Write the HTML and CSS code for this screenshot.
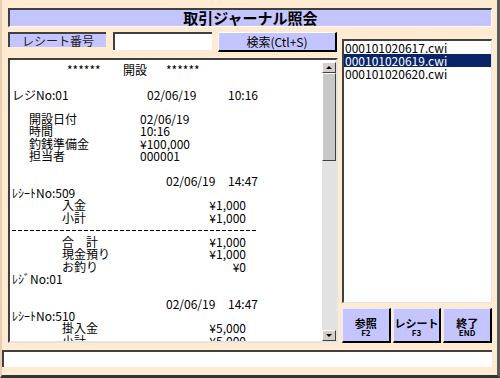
FILE: index.html
```html
<!DOCTYPE html>
<html lang="ja">
<head>
<meta charset="utf-8">
<title>取引ジャーナル照会</title>
<link rel="stylesheet" href="styles.css">
</head>
<body>
<div class="window">
  <div class="main">
    <div class="title">取引ジャーナル照会</div>
    <div class="content">
      <div class="left">
        <div class="search">
          <div class="label">レシート番号</div>
          <div class="input"></div>
          <div class="search-btn">検索(Ctl+S)</div>
        </div>
        <div class="journal">
          <div class="text">
            <div class="ln hd"><span class="a">******</span><span class="b">開設</span><span>******</span></div>
            <div class="ln"></div>
            <div class="ln reg"><span class="a">レジNo:01</span><span class="b">02/06/19</span><span>10:16</span></div>
            <div class="ln"></div>
            <div class="ln kv"><span class="a">開設日付</span><span>02/06/19</span></div>
            <div class="ln kv"><span class="a">時間</span><span>10:16</span></div>
            <div class="ln kv"><span class="a">釣銭準備金</span><span>¥100,000</span></div>
            <div class="ln kv"><span class="a">担当者</span><span>000001</span></div>
            <div class="ln"></div>
            <div class="ln dt"><span class="a">02/06/19</span><span>14:47</span></div>
            <div class="ln"><span>ﾚｼｰﾄNo:509</span></div>
            <div class="ln it"><span class="a">入金</span><span class="b">¥1,000</span></div>
            <div class="ln it"><span class="a">小計</span><span class="b">¥1,000</span></div>
            <div class="ln"><span class="dash"></span></div>
            <div class="ln it"><span class="a">合　計</span><span class="b">¥1,000</span></div>
            <div class="ln it"><span class="a">現金預り</span><span class="b">¥1,000</span></div>
            <div class="ln it"><span class="a">お釣り</span><span class="b">¥0</span></div>
            <div class="ln"><span>ﾚｼﾞNo:01</span></div>
            <div class="ln"></div>
            <div class="ln dt"><span class="a">02/06/19</span><span>14:47</span></div>
            <div class="ln"><span>ﾚｼｰﾄNo:510</span></div>
            <div class="ln it"><span class="a">掛入金</span><span class="b">¥5,000</span></div>
            <div class="ln it"><span class="a">小計</span><span class="b">¥5,000</span></div>
            <div class="ln"></div>
          </div>
          <div class="scroll">
            <div class="sb-btn up"></div>
            <div class="thumb"></div>
            <div class="track"></div>
            <div class="sb-btn down"></div>
          </div>
        </div>
      </div>
      <div class="right">
        <div class="files">
          <div class="file">000101020617.cwi</div>
          <div class="file sel">000101020619.cwi</div>
          <div class="file">000101020620.cwi</div>
        </div>
        <div class="fbtns">
          <div class="fbtn"><span class="cap">参照</span><span class="key">F2</span></div>
          <div class="fbtn"><span class="cap">レシート</span><span class="key">F3</span></div>
          <div class="fbtn"><span class="cap">終了</span><span class="key">END</span></div>
        </div>
      </div>
    </div>
  </div>
  <div class="status"></div>
</div>
</body>
</html>
```

FILE: styles.css
```css
* { box-sizing: border-box; margin: 0; padding: 0; }
html, body { width: 500px; height: 378px; overflow: hidden; }
body {
  font-family: "Noto Sans CJK JP", "Noto Sans", sans-serif;
  font-size: 12px;
  color: #000;
  background: #FEEBD1;
}
.window {
  width: 500px;
  height: 378px;
  background: #FEEBD1;
  border-left: 2px solid #E9CFB0;
  border-right: 3px solid #5a5a5a;
  border-bottom: 3px solid #333;
  padding-right: 5px;
  display: flex;
  flex-direction: column;
}
.main { padding: 8px 0 0 6px; }
.title {
  height: 19px;
  background: #C4C4FF;
  border-top: 2px solid #404040;
  border-left: 2px solid #404040;
  border-right: 1px solid #fff;
  border-bottom: 1px solid #fff;
  text-align: center;
  font-size: 15px;
  line-height: 15px;
  font-weight: bold;
}
.content { display: flex; gap: 4px; margin-top: 5px; }
.left { width: 330px; }
.search { display: flex; align-items: flex-start; height: 20px; }
.label {
  width: 98px;
  height: 15px;
  background: #C4C4FF;
  border-top: 2px solid #404040;
  border-left: 2px solid #404040;
  text-align: center;
  line-height: 13px;
  color: #222;
}
.input {
  width: 99px;
  height: 18px;
  margin-left: 7px;
  background: #fff;
  border-top: 2px solid #404040;
  border-left: 2px solid #404040;
}
.search-btn {
  width: 119px;
  height: 20px;
  margin-left: 6px;
  background: #C4C4FF;
  border-top: 1px solid #fff;
  border-left: 1px solid #fff;
  border-right: 2px solid #000;
  border-bottom: 2px solid #000;
  text-align: center;
  line-height: 17px;
}
.journal {
  margin-top: 6px;
  height: 285px;
  display: flex;
  background: #fff;
  border-top: 2px solid #404040;
  border-left: 2px solid #404040;
  border-right: 2px solid #e4e4e4;
  border-bottom: 2px solid #e4e4e4;
  overflow: hidden;
}
.text { flex: 1; padding: 4px 0 0 2px; overflow: hidden; }
.ln {
  height: 12.3px;
  line-height: 12.3px;
  display: flex;
  align-items: center;
  white-space: pre;
}
.ln span { flex-shrink: 0; }
.hd .a { margin-left: 55px; width: 56px; }
.hd .b { width: 43px; }
.reg .a { width: 135px; }
.reg .b { width: 81px; }
.kv .a { margin-left: 17px; width: 111px; }
.dt .a { margin-left: 154px; width: 62px; }
.it .a { margin-left: 50px; width: 134px; }
.it .b { width: 50px; text-align: right; }
.dash {
  width: 246px;
  height: 1px;
  background: repeating-linear-gradient(90deg, #000 0 4px, transparent 4px 6px);
}
.scroll {
  width: 14px;
  display: flex;
  flex-direction: column;
  padding-top: 2px;
}
.sb-btn, .thumb {
  background: #D4D0C8;
  border-top: 1px solid #fff;
  border-left: 1px solid #fff;
  border-right: 1px solid #404040;
  border-bottom: 1px solid #404040;
}
.sb-btn {
  height: 11px;
  display: flex;
  align-items: center;
  justify-content: center;
}
.up::after, .down::after {
  content: "";
  width: 0;
  height: 0;
  border-left: 3px solid transparent;
  border-right: 3px solid transparent;
}
.up::after { border-bottom: 3px solid #000; }
.down::after { border-top: 3px solid #000; }
.thumb { height: 88px; background: #C8C8C8; }
.track { flex: 1; background: #E2E2E2; }
.right { width: 150px; padding-top: 7px; display: flex; flex-direction: column; }
.files {
  height: 264px;
  background: #fff;
  border-top: 2px solid #404040;
  border-left: 2px solid #404040;
  border-right: 1px solid #e4e4e4;
  border-bottom: 1px solid #e4e4e4;
}
.file {
  height: 13px;
  line-height: 13px;
  padding-left: 1px;
  white-space: nowrap;
}
.file.sel { background: #0A246A; color: #fff; }
.fbtns { display: flex; gap: 2px; margin-top: 5px; height: 35px; }
.fbtn {
  flex: 1;
  background: #C4C4FF;
  border-top: 1px solid #e8e8ff;
  border-left: 1px solid #e8e8ff;
  border-right: 2px solid #000;
  border-bottom: 2px solid #000;
  display: flex;
  flex-direction: column;
  align-items: center;
  justify-content: center;
  padding-top: 4px;
  font-weight: bold;
}
.fbtn .cap { font-size: 11px; line-height: 11px; height: 11px; }
.fbtn .key { font-size: 8px; line-height: 8px; height: 8px; }
.status {
  margin-top: 7px;
  height: 17px;
  background: #fff;
  border-top: 2px solid #404040;
  border-left: 2px solid #404040;
}
```
